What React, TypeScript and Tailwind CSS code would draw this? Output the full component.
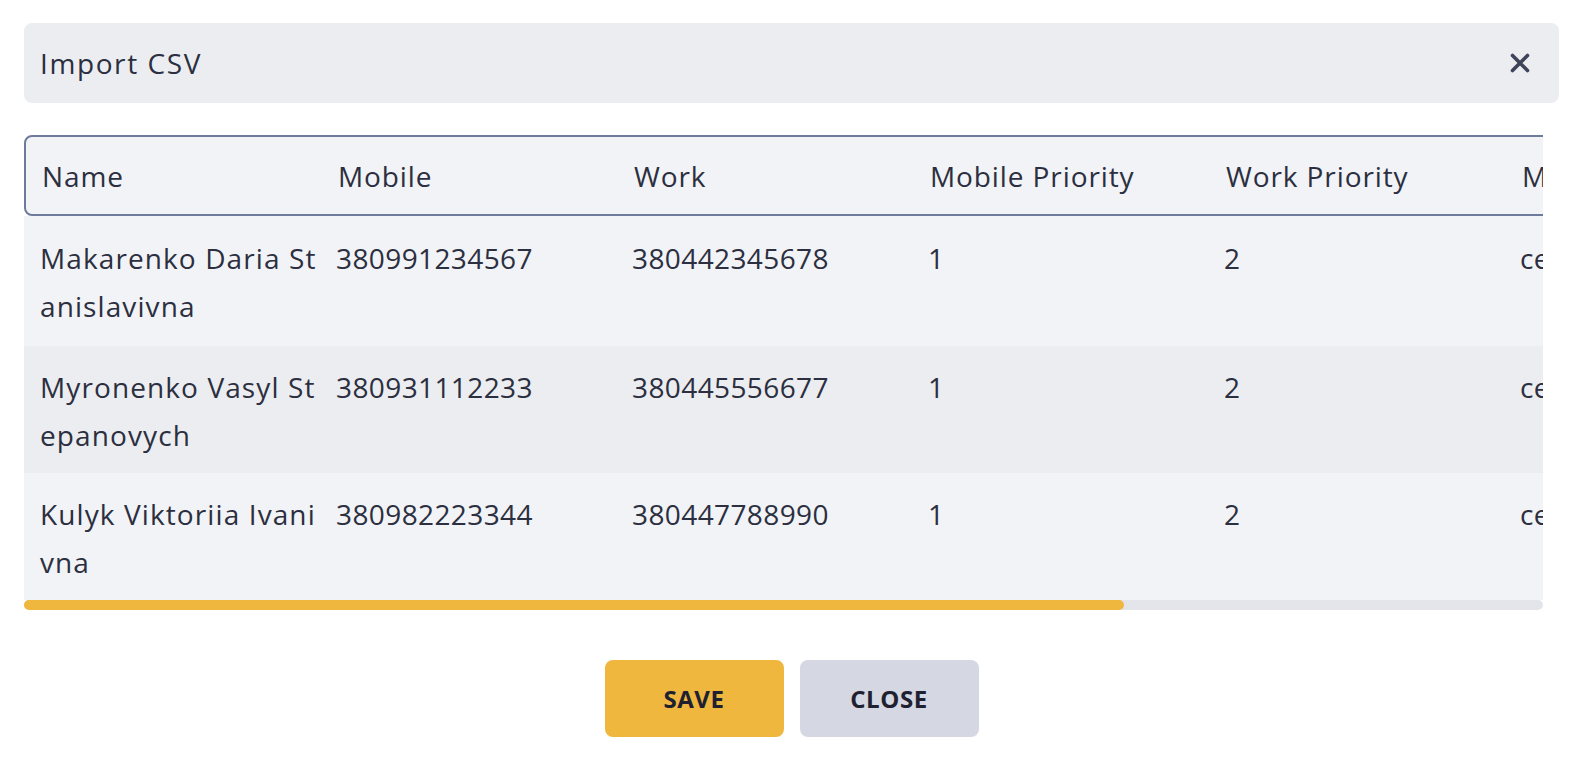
import React from 'react'

type Row = {
  name: [string, string]
  mobile: string
  work: string
  mobilePriority: string
  workPriority: string
  type: string
}

const rows: Row[] = [
  { name: ['Makarenko Daria St', 'anislavivna'], mobile: '380991234567', work: '380442345678', mobilePriority: '1', workPriority: '2', type: 'cell' },
  { name: ['Myronenko Vasyl St', 'epanovych'], mobile: '380931112233', work: '380445556677', mobilePriority: '1', workPriority: '2', type: 'cell' },
  { name: ['Kulyk Viktoriia Ivani', 'vna'], mobile: '380982223344', work: '380447788990', mobilePriority: '1', workPriority: '2', type: 'cell' },
]

const columns = ['Name', 'Mobile', 'Work', 'Mobile Priority', 'Work Priority', 'Main Type']

function CloseIcon() {
  return (
    <svg width="22" height="22" viewBox="0 0 22 22" fill="none">
      <path d="M3.5 3.5 18.5 18.5M18.5 3.5 3.5 18.5" stroke="#3f4459" strokeWidth="3.6" strokeLinecap="round" />
    </svg>
  )
}

export default function App() {
  return (
    <div
      className="w-[1574px] h-[774px] bg-white pl-6 pt-[23px] text-[#2b2f40] overflow-hidden"
      style={{ fontFamily: '"Open Sans", "Liberation Sans", sans-serif' }}
    >
      {/* Modal header */}
      <div className="w-[1535px] h-[80px] bg-[#ecedf1] rounded-lg flex items-center justify-between pl-4 pr-[28px]">
        <h2 className="text-[28px] font-medium tracking-[1.6px]">Import CSV</h2>
        <button className="flex items-center justify-center">
          <CloseIcon />
        </button>
      </div>

      {/* Table */}
      <div className="mt-[32px] w-[1519px] overflow-hidden">
        <div className="w-max text-[28px]">
          <div className="flex h-[81px] items-center bg-[#f2f3f6] border-2 border-[#6e7b9b] rounded-l-lg tracking-[0.9px]">
            {columns.map(c => (
              <div key={c} className="w-[296px] shrink-0 px-4 whitespace-nowrap">{c}</div>
            ))}
          </div>
          {rows.map((r, i) => (
            <div
              key={i}
              className={`flex leading-[48px] tracking-[0.4px] ${i === 0 ? 'h-[130px] pt-[18px]' : 'h-[127px] pt-[17px]'} ${i % 2 === 1 ? 'bg-[#ecedf1]' : 'bg-[#f2f3f6]'}`}
            >
              <div className="w-[296px] shrink-0 px-4 whitespace-nowrap tracking-[1.1px]">
                <span className="block">{r.name[0]}</span>
                <span className="block">{r.name[1]}</span>
              </div>
              <div className="w-[296px] shrink-0 px-4">{r.mobile}</div>
              <div className="w-[296px] shrink-0 px-4">{r.work}</div>
              <div className="w-[296px] shrink-0 px-4">{r.mobilePriority}</div>
              <div className="w-[296px] shrink-0 px-4">{r.workPriority}</div>
              <div className="w-[296px] shrink-0 px-4">{r.type}</div>
            </div>
          ))}
        </div>
        {/* horizontal scrollbar */}
        <div className="h-[10px] w-full bg-[#e4e5ea] rounded-full">
          <div className="h-full w-[1100px] bg-[#f0b73e] rounded-full" />
        </div>
      </div>

      {/* Actions */}
      <div className="w-[1535px] flex justify-center gap-4 mt-[50px]">
        <button className="w-[179px] h-[77px] rounded-lg bg-[#f0b73e] text-[#1f2130] text-[24px] font-bold tracking-[0.6px]">
          SAVE
        </button>
        <button className="w-[179px] h-[77px] rounded-lg bg-[#d5d8e2] text-[#1f2130] text-[24px] font-bold tracking-[0.6px]">
          CLOSE
        </button>
      </div>
    </div>
  )
}
